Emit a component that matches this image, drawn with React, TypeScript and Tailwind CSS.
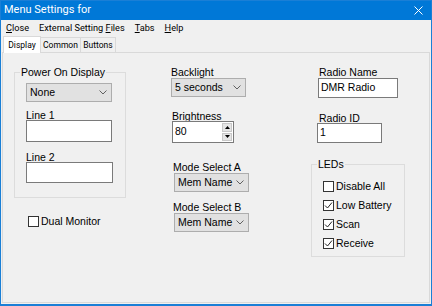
import React from 'react'

function Lbl({ children, className = '' }: { children: React.ReactNode; className?: string }) {
  return <div className={`text-[10.5px] leading-[10px] text-black whitespace-nowrap ${className}`}>{children}</div>
}

function Chevron() {
  return (
    <svg width="8" height="5" viewBox="0 0 8 5" className="shrink-0">
      <polyline points="0.5,0.5 4,4 7.5,0.5" fill="none" stroke="#606060" strokeWidth="1" />
    </svg>
  )
}

function Combo({ value, className = '' }: { value: string; className?: string }) {
  return (
    <div className={`h-[19px] border border-[#adadad] bg-[#e1e1e1] flex items-center justify-between pl-[3px] pr-[4px] text-[10.5px] text-black ${className}`}>
      <span className="whitespace-nowrap">{value}</span>
      <Chevron />
    </div>
  )
}

function TextBox({ value = '', className = '' }: { value?: string; className?: string }) {
  return (
    <div className={`bg-white border border-[#7a7a7a] flex items-center pl-[2px] text-[10.5px] text-black ${className}`}>
      {value}
    </div>
  )
}

function Check({ label, checked = false, className = '' }: { label: string; checked?: boolean; className?: string }) {
  return (
    <div className={`flex items-center gap-[2px] h-[19px] text-[10.5px] text-black ${className}`}>
      <span className="w-[11px] h-[11px] border border-[#333333] bg-white flex items-center justify-center">
        {checked && (
          <svg width="9" height="9" viewBox="0 0 9 9">
            <polyline points="1,4.5 3.5,7 8,1.5" fill="none" stroke="#222222" strokeWidth="1" />
          </svg>
        )}
      </span>
      <span className="whitespace-nowrap">{label}</span>
    </div>
  )
}

function Group({ title, className = '', children }: { title: string; className?: string; children: React.ReactNode }) {
  return (
    <div className={`relative border border-[#dcdcdc] ${className}`}>
      <span className="absolute top-[-6px] left-[5px] px-[1px] bg-[#f0f0f0] text-[10.5px] leading-[10px] text-black whitespace-nowrap">
        {title}
      </span>
      {children}
    </div>
  )
}

export default function App() {
  return (
    <div className="w-[432px] h-[306px] bg-[#1a7fd6] pt-[1px] px-[1px] pb-[2px] flex flex-col font-['Liberation_Sans',Arial,sans-serif]">
      {/* Title bar */}
      <div className="h-[19px] bg-[#0078d7] flex items-center justify-between pl-[3px] pr-[8px] text-white text-[11px] font-['Roboto',sans-serif]">
        <span>Menu Settings for</span>
        <svg width="9" height="9" viewBox="0 0 9 9">
          <path d="M0.5 0.5 L8.5 8.5 M8.5 0.5 L0.5 8.5" stroke="#ffffff" strokeWidth="1" />
        </svg>
      </div>

      <div className="flex-1 bg-[#f0f0f0] flex flex-col">
        {/* Menu */}
        <div className="h-[16px] flex items-center gap-[10px] pl-[5px] text-[9.2px] text-black font-['Roboto',sans-serif]">
          <span><span className="underline">C</span>lose</span>
          <span>External Setting <span className="underline">F</span>iles</span>
          <span><span className="underline">T</span>abs</span>
          <span><span className="underline">H</span>elp</span>
        </div>

        {/* Tabs */}
        <div className="h-[16px] flex items-end pl-[2px] text-[8.5px] text-black font-['Roboto',sans-serif]">
          <div className="relative z-10 w-[38px] h-[17px] -mb-[1px] bg-white border border-b-0 border-[#d9d9d9] flex items-center justify-center">
            Display
          </div>
          <div className="w-[40px] h-[15px] bg-[#f0f0f0] border border-l-0 border-b-0 border-[#d9d9d9] flex items-center justify-center">
            Common
          </div>
          <div className="w-[35px] h-[15px] bg-[#f0f0f0] border border-l-0 border-b-0 border-[#d9d9d9] flex items-center justify-center">
            Buttons
          </div>
        </div>

        {/* Tab page */}
        <div className="flex-1 mx-[1px] mb-[1px] border border-[#d9d9d9] flex items-start">
          {/* Left column */}
          <div className="ml-[11px] w-[112px] flex flex-col">
            <Group title="Power On Display" className="mt-[19px] h-[126px] pl-[11px] pt-[10px]">
              <Combo value="None" className="w-[86px]" />
              <Lbl className="mt-[8px]">Line 1</Lbl>
              <TextBox className="w-[86px] h-[22px]" />
              <Lbl className="mt-[10px]">Line 2</Lbl>
              <TextBox className="w-[87px] h-[21px]" />
            </Group>
            <Check label="Dual Monitor" className="mt-[14px] ml-[14px]" />
          </div>

          {/* Middle column */}
          <div className="ml-[44px] w-[80px] flex flex-col">
            <Lbl className="mt-[14px] ml-[1px]">Backlight</Lbl>
            <Combo value="5 seconds" className="mt-[1px] ml-[1px] w-[75px]" />
            <Lbl className="mt-[14px] ml-[2px]">Brightness</Lbl>
            <div className="ml-[2px] w-[62px] h-[22px] bg-white border border-[#7a7a7a] flex text-[10.5px] text-black">
              <span className="flex-1 pl-[2px] flex items-center">80</span>
              <div className="w-[11px] flex flex-col gap-[1px] p-[1px] pl-0">
                <div className="flex-1 bg-[#e5e5e5] border border-[#c8c8c8] flex items-center justify-center">
                  <svg width="5" height="3" viewBox="0 0 5 3"><polygon points="2.5,0 5,3 0,3" fill="#000" /></svg>
                </div>
                <div className="flex-1 bg-[#e5e5e5] border border-[#c8c8c8] flex items-center justify-center">
                  <svg width="5" height="3" viewBox="0 0 5 3"><polygon points="0,0 5,0 2.5,3" fill="#000" /></svg>
                </div>
              </div>
            </div>
            <Lbl className="mt-[19px] ml-[3px]">Mode Select A</Lbl>
            <Combo value="Mem Name" className="mt-[1px] ml-[4px] w-[75px]" />
            <Lbl className="mt-[10px] ml-[3px]">Mode Select B</Lbl>
            <Combo value="Mem Name" className="mt-[1px] ml-[4px] w-[75px]" />
          </div>

          {/* Right column */}
          <div className="ml-[61px] w-[94px] flex flex-col">
            <Lbl className="mt-[14px] ml-[8px]">Radio Name</Lbl>
            <TextBox value="DMR Radio" className="mt-[1px] ml-[7px] w-[80px] h-[20px]" />
            <Lbl className="mt-[15px] ml-[8px]">Radio ID</Lbl>
            <TextBox value="1" className="ml-[6px] w-[65px] h-[20px]" />
            <Group title="LEDs" className="mt-[21px] h-[93px] pl-[11px] pt-[12px]">
              <Check label="Disable All" />
              <Check label="Low Battery" checked />
              <Check label="Scan" checked />
              <Check label="Receive" checked />
            </Group>
          </div>
        </div>
      </div>
    </div>
  )
}
